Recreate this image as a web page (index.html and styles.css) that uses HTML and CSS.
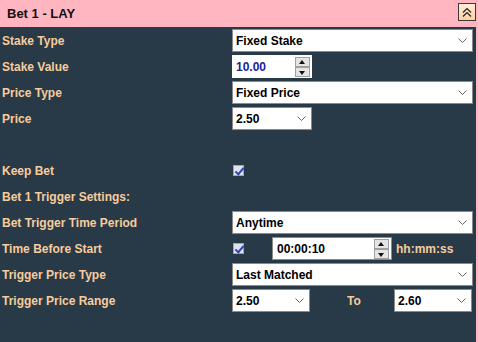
FILE: index.html
```html
<!DOCTYPE html>
<html lang="en">

<head>
    <meta charset="UTF-8">
    <title>Bet 1 - LAY</title>
    <link rel="stylesheet" href="styles.css">
</head>

<body>
    <div class="panel">
        <div class="panel-head">
            <span class="panel-title">Bet 1 - LAY</span>
            <button class="collapse-btn" title="Collapse">
                <svg width="10" height="11" viewBox="0 0 10 11">
                    <path d="M1 5.5l4-4 4 4M1 9.5l4-4 4 4" fill="none" stroke="#222" stroke-width="1.2" />
                </svg>
            </button>
        </div>

        <div class="panel-body">
            <div class="row">
                <label class="label">Stake Type</label>
                <select class="select wide">
                    <option>Fixed Stake</option>
                </select>
            </div>
            <div class="row">
                <label class="label">Stake Value</label>
                <span class="spin-box stake">
                    <input class="spin-input value" type="text" value="10.00">
                    <span class="spin">
                        <button class="spin-up"></button>
                        <button class="spin-down"></button>
                    </span>
                </span>
            </div>
            <div class="row">
                <label class="label">Price Type</label>
                <select class="select wide">
                    <option>Fixed Price</option>
                </select>
            </div>
            <div class="row">
                <label class="label">Price</label>
                <select class="select small">
                    <option>2.50</option>
                </select>
            </div>
            <div class="row"></div>
            <div class="row">
                <label class="label">Keep Bet</label>
                <span class="check checked"></span>
            </div>
            <div class="row">
                <label class="label">Bet 1 Trigger Settings:</label>
            </div>
            <div class="row">
                <label class="label">Bet Trigger Time Period</label>
                <select class="select wide">
                    <option>Anytime</option>
                </select>
            </div>
            <div class="row">
                <label class="label">Time Before Start</label>
                <span class="check checked"></span>
                <span class="spin-box time">
                    <input class="spin-input" type="text" value="00:00:10">
                    <span class="spin">
                        <button class="spin-up"></button>
                        <button class="spin-down"></button>
                    </span>
                </span>
                <span class="unit">hh:mm:ss</span>
            </div>
            <div class="row">
                <label class="label">Trigger Price Type</label>
                <select class="select wide">
                    <option>Last Matched</option>
                </select>
            </div>
            <div class="row">
                <label class="label">Trigger Price Range</label>
                <select class="select range">
                    <option>2.50</option>
                </select>
                <span class="to">To</span>
                <select class="select range">
                    <option>2.60</option>
                </select>
            </div>
        </div>
    </div>
</body>

</html>
```

FILE: styles.css
```css
body {
    margin: 0;
    font-family: "Liberation Sans", Arial, sans-serif;
    font-size: 12px;
    font-weight: bold;
}

.panel {
    width: 478px;
    min-height: 100vh;
    box-sizing: border-box;
    background: #283a48;
    border-right: 2px solid #ffb6c1;
}

.panel-head {
    height: 27px;
    background: #ffb6c1;
    display: flex;
    align-items: flex-start;
    justify-content: space-between;
    padding: 0 0 0 7px;
    margin-right: -2px;
}

.panel-title {
    font-size: 13px;
    line-height: 27px;
    color: #111;
}

.collapse-btn {
    width: 18px;
    height: 18px;
    margin: 3px 2px 0 0;
    padding: 0;
    border: 1px solid #3a3a3a;
    background: linear-gradient(#ffeedd, #ffcf9f);
    display: flex;
    align-items: center;
    justify-content: center;
}

.panel-body {
    padding-bottom: 10px;
}

.row {
    display: flex;
    align-items: center;
    height: 26px;
    padding-top: 1px;
    box-sizing: border-box;
}

.label {
    flex: 0 0 232px;
    box-sizing: border-box;
    padding-left: 2px;
    color: #f7cc9c;
}

.select {
    appearance: none;
    height: 23px;
    box-sizing: border-box;
    border: 1px solid #8a8a8a;
    border-radius: 0;
    padding: 0 16px 0 3px;
    font: inherit;
    color: #000;
    background: #fff url("data:image/svg+xml,%3Csvg xmlns='http://www.w3.org/2000/svg' width='9' height='5'%3E%3Cpath d='M.5.5l4 4 4-4' fill='none' stroke='%23666'/%3E%3C/svg%3E") no-repeat right 5px center;
}

.select.wide {
    width: 241px;
}

.select.small {
    width: 80px;
}

.select.range {
    width: 78px;
}

.to {
    flex: 0 0 84px;
    text-align: center;
    padding-left: 4px;
    box-sizing: border-box;
    color: #f7cc9c;
}

.spin-box {
    display: flex;
    align-items: center;
    height: 23px;
    box-sizing: border-box;
    background: #fff;
}

.spin-box.stake {
    width: 80px;
}

.spin-box.time {
    width: 120px;
    border: 1px solid #8a8a8a;
    margin-left: 28px;
}

.spin-input {
    flex: 1;
    min-width: 0;
    border: none;
    outline: none;
    padding: 0 0 0 4px;
    font: inherit;
    color: #000;
    background: transparent;
}

.spin-input.value {
    color: #1c1c9c;
}

.spin {
    display: flex;
    flex-direction: column;
    width: 15px;
    margin-right: 2px;
}

.spin button {
    height: 10px;
    padding: 0;
    border: 1px solid #a0a0a0;
    background: #e4e4e4;
    position: relative;
}

.spin button::after {
    content: "";
    position: absolute;
    left: 3px;
    border-left: 3.5px solid transparent;
    border-right: 3.5px solid transparent;
}

.spin-up::after {
    top: 2px;
    border-bottom: 4px solid #111;
}

.spin-down::after {
    top: 3px;
    border-top: 4px solid #111;
}

.check {
    width: 11px;
    height: 11px;
    margin-left: 1px;
    box-sizing: border-box;
    border: 1px solid #9aa6be;
    background: #dde3ef;
    position: relative;
}

.check.checked::after {
    content: "";
    position: absolute;
    left: 3px;
    top: 0;
    width: 3px;
    height: 7px;
    border: solid #3346b8;
    border-width: 0 2px 2px 0;
    transform: rotate(40deg);
}

.unit {
    margin-left: 4px;
    color: #f7cc9c;
}
```
